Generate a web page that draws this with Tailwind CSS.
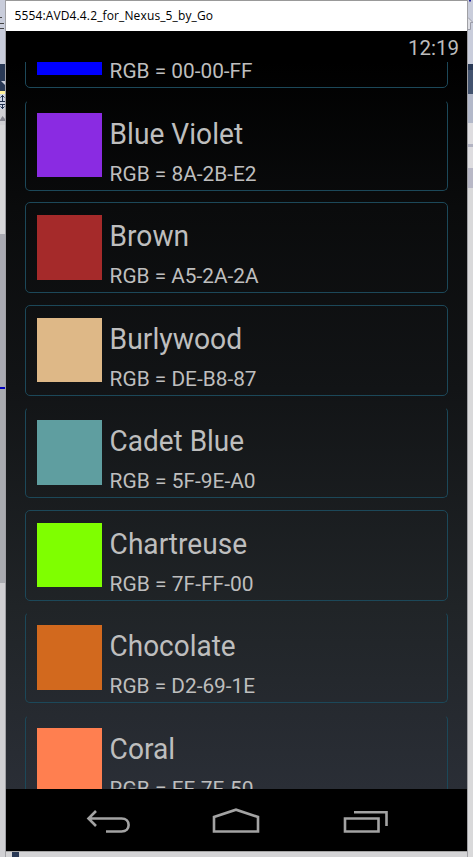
<!DOCTYPE html>
<html lang="en">
<head>
<meta charset="utf-8">
<title>5554:AVD4.4.2_for_Nexus_5_by_Go</title>
<script src="https://cdn.jsdelivr.net/npm/@tailwindcss/browser@4"></script>
</head>
<body class="w-[473px] h-[857px] overflow-hidden flex bg-[#dcdcde] font-['Roboto',sans-serif] relative">
  <!-- Desktop strip left of the window -->
  <div class="w-[6px] h-[857px] flex flex-col shrink-0 border-r border-[#a0a0a4]">
    <div class="h-[64px] bg-[#c9cddb] pt-[17px]">
      <div class="w-[2px] h-px bg-[#444]"></div>
      <div class="w-[4px] h-px mt-[5px] bg-[#444]"></div>
      <div class="w-[4px] h-px mt-[4px] bg-[#444]"></div>
    </div>
    <div class="h-[27px] bg-[#293955]"><svg class="block" width="5" height="27"><path d="M1 17H5V21Z" fill="#ccd0dc"/></svg></div>
    <div class="h-[3px] bg-[#fff29d]"></div>
    <div class="h-[15px] bg-[#cfd6e5]"><svg class="block" width="5" height="15"><path d="M0 7.5H5M0 10.500H5M2.500 1V7M2.500 10V15M.5 3.500L2.500 1.500L4.500 3.500M.5 12.500L2.500 14.500L4.500 12.500" fill="none" stroke="#1f2f4b"/></svg></div>
    <div class="h-[16px] bg-[#d0d0d4]"><svg class="block" width="5" height="16"><path d="M0 11L2.500 7L5 10V12H0Z" fill="#85858f"/></svg></div>
    <div class="h-[109px] bg-[#d7d7d9]"></div>
    <div class="h-[153px] bg-[#a9aab2]"></div>
    <div class="h-[2px] bg-[#0000bb]"></div>
    <div class="h-[194px] bg-[#a9abb0]"></div>
    <div class="grow bg-[#d0d0d3]"></div>
  </div>

  <!-- Emulator window -->
  <div class="w-[461px] h-[857px] shrink-0 flex flex-col">
    <div class="h-[31px] shrink-0 bg-white border-t border-[#999] pl-[8.500px] flex items-center">
      <span class="font-['Open_Sans',sans-serif] text-[12px] leading-[20px] tracking-[0.13px] text-black whitespace-nowrap">5554:AVD4.4.2_for_Nexus_5_by_Go</span>
    </div>
    <div class="h-[31px] shrink-0 bg-black flex justify-end pr-[8px]">
      <span class="text-[20.500px] leading-[34px] text-[#bdbdbd]">12:19</span>
    </div>
    <main class="h-[727px] shrink-0 overflow-hidden bg-[linear-gradient(to_bottom,#000000,#0a0b0c_20%,#121416_45%,#202427_75%,#2a2e36)] pl-[19px]">
      <div id="list" class="flex flex-col gap-[11.5px] mt-[-64.700px]"></div>
    </main>
    <nav class="h-[62px] shrink-0 bg-black">
      <svg class="block" width="461" height="62" fill="none" stroke="#a3a3a3" stroke-width="2.600">
        <path d="M90 22L82.500 29.500L90 37M83 29.500H115.500C125 29.500 125 42.500 115.500 42.500H100"/>
        <path d="M208 42.500V28L230 20.700L252 28V42.500Z"/>
        <path d="M339 29.500H372.500V42.500H339ZM348 23.300H380.500V37"/>
      </svg>
    </nav>
    <div class="h-[6px] flex bg-[#d4d4d6] border-t border-[#a5a5a5] pl-[6px]"><div class="w-[7px] h-[5px] bg-[#293955]"></div></div>
  </div>

  <!-- Desktop strip right of the window -->
  <div class="w-[6px] h-[857px] flex flex-col shrink-0 border-l border-[#a0a0a4]">
    <div class="h-[64px] bg-[#c9cddb]"><svg class="block" width="5" height="64"><path d="M1 0H3" stroke="#23239c" stroke-width="3"/><path d="M0 17.500L5 22.500H2.500V29.500H0" fill="#dedfe5" stroke="#9b9ca8"/></svg></div>
    <div class="h-[6px] bg-[#293955]"></div>
    <div class="h-[24px] bg-[#43536f]"></div>
    <div class="h-[29px] bg-[#b2b8c9]"></div>
    <div class="h-[21px] bg-[#dedde0]"></div>
    <div class="h-[3px] bg-[#b2b3c2]"></div>
    <div class="h-[21px] bg-[#dedde0]"></div>
    <div class="h-[20px] bg-[#b8b8c6]"></div>
    <div class="grow bg-[#d9d9da]"></div>
  </div>

  <template id="row">
    <div class="w-[423px] h-[91px] shrink-0 rounded-[5px] border border-[#1c4859] flex pl-[11.300px] pt-[12px]">
      <div class="swatch w-[64.500px] h-[64.500px] shrink-0"></div>
      <svg class="block overflow-visible ml-[7.500px]" width="300" height="78" fill="#bebebe">
        <text class="name text-[29px]" x="0.600" y="31"></text>
        <text class="rgb text-[20px]" x="0.600" y="68"></text>
      </svg>
    </div>
  </template>
  <script>
    // name, hex, name width, value width, top edge visible
    const colors = [
      ['Blue', '00-00-FF', 57, 143, true],
      ['Blue Violet', '8A-2B-E2', 133.5, 147, false],
      ['Brown', 'A5-2A-2A', 79.5, 149, true],
      ['Burlywood', 'DE-B8-87', 132.5, 147, true],
      ['Cadet Blue', '5F-9E-A0', 134.5, 146, false],
      ['Chartreuse', '7F-FF-00', 137.5, 144, true],
      ['Chocolate', 'D2-69-1E', 126, 145.5, false],
      ['Coral', 'FF-7F-50', 65.5, 144, false]
    ];
    for (const [name, hex, nameWidth, hexWidth, topEdge] of colors) {
      const row = document.getElementById('row').content.cloneNode(true);
      if (!topEdge) row.firstElementChild.classList.add('border-t-transparent');
      row.querySelector('.swatch').style.backgroundColor = '#' + hex.replaceAll('-', '');
      const title = row.querySelector('.name');
      title.textContent = name;
      title.setAttribute('textLength', nameWidth);
      const value = row.querySelector('.rgb');
      value.textContent = 'RGB = ' + hex;
      value.setAttribute('textLength', hexWidth);
      for (const t of [title, value]) t.setAttribute('lengthAdjust', 'spacingAndGlyphs');
      document.getElementById('list').append(row);
    }
  </script>
  <span class="hidden border-t-transparent"></span>
</body>
</html>
